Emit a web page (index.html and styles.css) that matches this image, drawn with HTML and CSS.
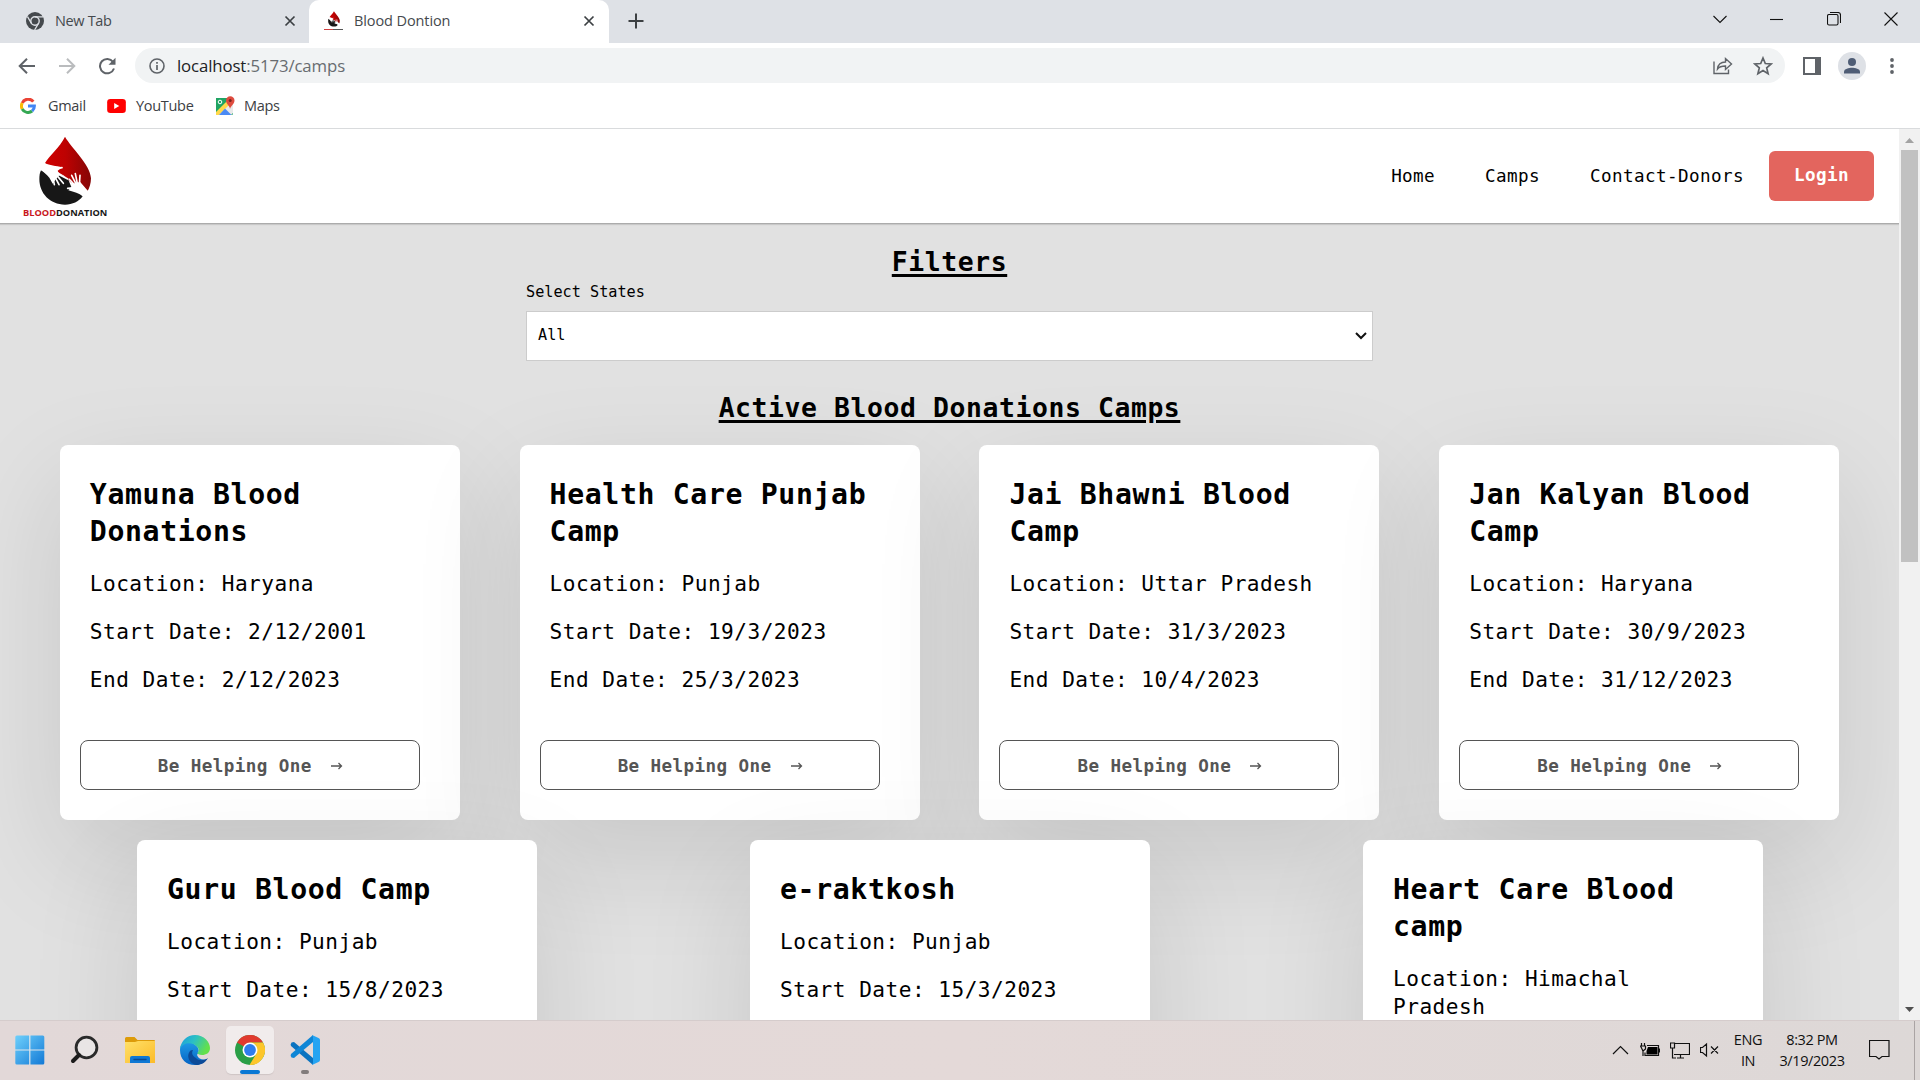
FILE: index.html
```html
<!DOCTYPE html>
<html lang="en">
<head>
<meta charset="utf-8">
<title>Blood Dontion</title>
<link rel="stylesheet" href="styles.css">
</head>
<body>
<svg width="0" height="0" class="defs">
  <defs>
    <linearGradient id="red" x1="0" y1="0" x2="1" y2="0"><stop offset="0" stop-color="#d00000"/><stop offset=".45" stop-color="#bd0202"/><stop offset="1" stop-color="#850606"/></linearGradient>
    <linearGradient id="win" x1="0" y1="0" x2="1" y2="1"><stop offset="0" stop-color="#6fd0fb"/><stop offset="1" stop-color="#1279d6"/></linearGradient>
    <linearGradient id="fold" x1="0" y1="0" x2="1" y2="1"><stop offset="0" stop-color="#ffe069"/><stop offset="1" stop-color="#fcbb28"/></linearGradient>
    <linearGradient id="edgeTop" x1="0" y1="0" x2="1" y2=".4"><stop offset="0" stop-color="#1a9be0"/><stop offset=".5" stop-color="#2cc0c4"/><stop offset="1" stop-color="#63e04c"/></linearGradient>
    <linearGradient id="edgeLow" x1="0" y1="0" x2="0" y2="1"><stop offset="0" stop-color="#1f9be6"/><stop offset="1" stop-color="#0563c4"/></linearGradient>
    <symbol id="drop" viewBox="113 32 165 212">
      <path fill="url(#red)" d="M195 35C213 68 271 118 273 160C273 176 268 189 263 198C250 190 246 180 232 176C214 178 206 166 197 156C188 148 178 146 172 138L187 127C168 122 148 122 135 114C148 92 180 66 195 35Z"/>
      <path fill="#171717" d="M123 136C133 142 138 148 148 158L158 176L176 150L190 153L205 164L214 186L205 196C222 202 238 205 248 214C236 230 218 239 195 239C150 239 118 205 118 163C118 152 119 144 123 136Z"/>
      <g fill="none" stroke="#fff" stroke-linecap="round">
        <path stroke-width="5" d="M165 132L186 128M158 156L163 179M164 154L177 179M171 152L190 175M178 149L203 162M225 188L203 190M224 180L208 163M228 177L215 151M232 176L226 146M238 180L240 151"/>
      </g>
      <path fill="#fff" d="M133 116L168 127L178 150L170 160L155 160L140 146L122 134ZM222 176L240 170L264 198L249 214L236 202L220 192Z"/>
    </symbol>
    <symbol id="x" viewBox="0 0 12 12"><path d="M1.500 1.500l9 9m0-9l-9 9" fill="none" stroke="#3c4043" stroke-width="1.700"/></symbol>
  </defs>
</svg>

<header class="browser">
  <div class="tabstrip">
    <div class="tab">
      <svg class="favicon" viewBox="0 0 18 18"><circle cx="9" cy="9" r="9" fill="#45494d"/><circle cx="9" cy="9" r="4.2" fill="#45494d" stroke="#dee1e6" stroke-width="1.4"/><path d="M9 4.8h8M5.3 11.2L1.5 4.6M12.6 11.2l-4 6.8" stroke="#dee1e6" stroke-width="1.3"/></svg>
      <span class="tab-title newtab">New Tab</span>
      <svg class="close"><use href="#x"/></svg>
    </div>
    <div class="tab active">
      <svg class="favicon brand" viewBox="0 0 20 20"><use href="#drop" x="3" y="0" width="14" height="16"/><path d="M0 18.5h9" stroke="#cf4040"/><path d="M9 18.5h10" stroke="#555"/></svg>
      <span class="tab-title">Blood Dontion</span>
      <svg class="close"><use href="#x"/></svg>
    </div>
    <svg class="plus" viewBox="0 0 16 16"><path d="M8 .5v15M.5 8h15" stroke="#3c4043" stroke-width="2"/></svg>
    <div class="window-controls">
      <span><svg width="14" height="14" viewBox="0 0 14 14"><path d="M.5 4L7 10.500l6.500-6.500"/></svg></span>
      <span><svg width="14" height="14" viewBox="0 0 14 14"><path d="M0 7.500h13"/></svg></span>
      <span><svg width="14" height="14" viewBox="0 0 14 14"><rect x=".5" y="2.500" width="10.500" height="10.500" rx="1.500"/><path d="M3 .5h8a2.500 2.500 0 0 1 2.500 2.500v8"/></svg></span>
      <span><svg width="14" height="14" viewBox="0 0 14 14"><path d="M.5.5l13 13m0-13l-13 13"/></svg></span>
    </div>
  </div>

  <div class="toolbar">
    <svg class="nav-btn" viewBox="0 0 18 18"><path d="M17 9H2M9 1.700L1.700 9 9 16.300" stroke="#5f6368"/></svg>
    <svg class="nav-btn" viewBox="0 0 18 18"><path d="M1 9h15M9 1.700L16.300 9 9 16.300" stroke="#babcbe"/></svg>
    <svg class="nav-btn" viewBox="0 0 18 18"><path d="M16 11.500A7.200 7.200 0 1 1 15 4.800" stroke="#5f6368"/><path d="M17.500.8v7h-7z" fill="#5f6368" stroke="none"/></svg>
    <div class="omnibox">
      <svg class="info" viewBox="0 0 16 16"><circle cx="8" cy="8" r="7" fill="none" stroke="#5f6368" stroke-width="1.600"/><path d="M8 7v5M8 4v1.800" stroke="#5f6368" stroke-width="1.700"/></svg>
      <span class="url"><b>localhost</b>:5173/camps</span>
      <svg class="share" viewBox="0 0 20 20"><path d="M1 5.500v12h14.500v-4M4.500 13c.5-4.500 3.500-7 8-7V2.500l6 5.500-6 5.500V10c-4 0-6.500 1-8 3z" fill="none" stroke="#5f6368" stroke-width="1.400"/></svg>
      <svg class="star" viewBox="0 0 20 20"><path d="M10 2l2.300 5.500 5.900.5-4.500 3.900 1.400 5.800L10 14.600l-5.100 3.100 1.400-5.800L1.800 8l5.900-.5z" fill="none" stroke="#5f6368" stroke-width="1.700"/></svg>
    </div>
    <svg class="panel" viewBox="0 0 18 18"><rect x="1" y="1" width="16" height="16" fill="none" stroke="#5f6368" stroke-width="2"/><path d="M12 1h5v16h-5z" fill="#5f6368"/></svg>
    <svg class="avatar" viewBox="0 0 28 28"><circle cx="14" cy="14" r="14" fill="#dee1e6"/><circle cx="14" cy="10" r="4" fill="#4f5d75"/><path d="M6 21.500v-1.800c0-3 5-4 8-4s8 1 8 4v1.800z" fill="#4f5d75"/></svg>
    <svg class="dots" viewBox="0 0 4 16"><g fill="#5f6368"><circle cx="2" cy="2" r="1.900"/><circle cx="2" cy="8" r="1.900"/><circle cx="2" cy="14" r="1.900"/></g></svg>
  </div>

  <nav class="bookmarks">
    <a class="bm-gmail"><svg width="16" height="16" viewBox="0 0 16 16" fill="none" stroke-width="3"><path d="M13.300 3.700A6.500 6.500 0 0 0 2.200 5" stroke="#ea4335"/><path d="M2.200 5a6.500 6.500 0 0 0 0 6" stroke="#fbbc05"/><path d="M2.200 11a6.500 6.500 0 0 0 9.900 2" stroke="#34a853"/><path d="M12.100 13A6.300 6.300 0 0 0 14.400 8H8" stroke="#4285f4"/></svg><span>Gmail</span></a>
    <a class="bm-youtube"><svg width="19" height="14" viewBox="0 0 20 15"><rect width="20" height="15" rx="3.500" fill="#f00"/><path d="M7.500 4.300v6.400l5.500-3.200z" fill="#fff"/></svg><span>YouTube</span></a>
    <a class="bm-maps"><svg width="19" height="19" viewBox="0 0 19 19"><rect x="0" y="2" width="17" height="17" rx="1.500" fill="#1fa463"/><path d="M2 19L17 4v13l-2 2z" fill="#e9e9e9"/><path d="M0 16L12 4l3 3L3 19H0z" fill="#ffd84a"/><path d="M0 2h12v2L0 14z" fill="#1fa463"/><path d="M3 19l6-6.500 6.500 6.500z" fill="#4a8af4"/><path d="M14 13c0-3-4-5-4-8.500a4 4 0 0 1 8.500 0C18.500 8 14.500 10 14 13z" fill="#de4b3e"/><circle cx="14.200" cy="4.400" r="1.500" fill="#7a231d"/><circle cx="4" cy="6" r="1.800" fill="none" stroke="#fff" stroke-width="1"/></svg><span>Maps</span></a>
  </nav>
</header>

<main class="viewport">
  <div class="page">
    <header class="navbar">
      <svg class="logo" viewBox="66 30 260 250">
        <use href="#drop" x="113" y="32" width="165" height="212"/>
        <text x="69" y="272" font-size="28" textLength="99" lengthAdjust="spacingAndGlyphs" fill="#c8171c">BLOOD</text>
        <text x="168" y="272" font-size="28" textLength="154" lengthAdjust="spacingAndGlyphs" fill="#171717">DONATION</text>
      </svg>
      <nav class="links">
        <a>Home</a>
        <a>Camps</a>
        <a>Contact-Donors</a>
        <button class="login">Login</button>
      </nav>
    </header>

    <section class="filters">
      <h2>Filters</h2>
      <label>Select States</label>
      <div class="select"><span>All</span><svg width="12" height="8" viewBox="0 0 12 8"><path d="M1 1l5 5 5-5" fill="none" stroke="#111" stroke-width="2"/></svg></div>
    </section>

    <section class="camps">
      <h2>Active Blood Donations Camps</h2>
      <div class="row">
        <article class="card">
          <h3>Yamuna Blood Donations</h3>
          <p>Location: Haryana</p><p>Start Date: 2/12/2001</p><p>End Date: 2/12/2023</p>
          <button class="help">Be Helping One <i><svg width="12" height="8" viewBox="0 0 12 8"><path d="M0 4h10.500M7.500 1l3 3-3 3"/></svg></i></button>
        </article>
        <article class="card">
          <h3>Health Care Punjab Camp</h3>
          <p>Location: Punjab</p><p>Start Date: 19/3/2023</p><p>End Date: 25/3/2023</p>
          <button class="help">Be Helping One <i><svg width="12" height="8" viewBox="0 0 12 8"><path d="M0 4h10.500M7.500 1l3 3-3 3"/></svg></i></button>
        </article>
        <article class="card">
          <h3>Jai Bhawni Blood Camp</h3>
          <p>Location: Uttar Pradesh</p><p>Start Date: 31/3/2023</p><p>End Date: 10/4/2023</p>
          <button class="help">Be Helping One <i><svg width="12" height="8" viewBox="0 0 12 8"><path d="M0 4h10.500M7.500 1l3 3-3 3"/></svg></i></button>
        </article>
        <article class="card">
          <h3>Jan Kalyan Blood Camp</h3>
          <p>Location: Haryana</p><p>Start Date: 30/9/2023</p><p>End Date: 31/12/2023</p>
          <button class="help">Be Helping One <i><svg width="12" height="8" viewBox="0 0 12 8"><path d="M0 4h10.500M7.500 1l3 3-3 3"/></svg></i></button>
        </article>
      </div>
      <div class="row three">
        <article class="card">
          <h3>Guru Blood Camp</h3>
          <p>Location: Punjab</p><p>Start Date: 15/8/2023</p>
        </article>
        <article class="card">
          <h3>e-raktkosh</h3>
          <p>Location: Punjab</p><p>Start Date: 15/3/2023</p>
        </article>
        <article class="card">
          <h3>Heart Care Blood camp</h3>
          <p>Location: Himachal Pradesh</p>
        </article>
      </div>
    </section>
  </div>
  <div class="scrollbar">
    <svg width="9" height="5" viewBox="0 0 9 5"><path d="M0 5L4.500 0 9 5z" fill="#a3a3a3"/></svg>
    <div class="thumb"></div>
    <svg width="9" height="5" viewBox="0 0 9 5"><path d="M0 0l4.500 5L9 0z" fill="#505050"/></svg>
  </div>
</main>

<footer class="taskbar">
  <div class="apps">
    <span><svg width="30" height="30" viewBox="0 0 30 30"><rect width="29" height="29" x=".3" y=".5" rx="1.500" fill="url(#win)"/><path d="M14.800 0v30M0 15h30" stroke="#e0e6ec" stroke-width="1.200"/></svg></span>
    <span><svg width="30" height="30" viewBox="0 0 30 30"><circle cx="16.500" cy="12.500" r="10.400" fill="#e9e5e5" stroke="#2a2a2a" stroke-width="2.800"/><path d="M9 20l-6 6" stroke="#1c1c1c" stroke-width="4" stroke-linecap="round"/></svg></span>
    <span><svg width="30" height="30" viewBox="0 0 30 30"><path d="M0 3.500Q0 2 1.500 2h8l3 3H29q1 0 1 1v6H0z" fill="#dd9b0a"/><path d="M0 7h10l3-1h17v22H0z" fill="url(#fold)"/><path d="M5 28v-5q0-2 2-2h16q2 0 2 2v5z" fill="#0f78d4"/><path d="M9 24.500h12" stroke="#0a4a92" stroke-width="1.400" stroke-linecap="round"/></svg></span>
    <span><svg width="30" height="30" viewBox="0 0 30 30"><path d="M0 15C0 7 8 5 14 9c5 3 6 7 3 11 2 5 6 5 10 4-3 4-7 6-12 6C6 30 0 24 0 15z" fill="url(#edgeLow)"/><path d="M10 16c-4 5-1 12 6 14 5 0 9-2 12-7-4 3-10 3-12 0-5-3-4-6-3-8-1 0-2 0-3 1z" fill="#0c4a98"/><path d="M0 14C1 6 7 0 15 0c9 0 15 7 15 13 0 5-4 7-8 7-3 0-5-1-4.500-2.500 2-1 1.500-4-.5-6C12 6.500 3 7 0 14z" fill="url(#edgeTop)"/></svg></span>
    <span><i class="tile running"><svg width="30" height="30" viewBox="0 0 30 30"><circle cx="15" cy="15" r="15" fill="#2a9f47"/><path d="M15 15L2 7.500A15 15 0 0 1 28 7.500H15z" fill="#e13a2f"/><path d="M28 7.500A15 15 0 0 1 14.500 30L21.500 18.500 21 10 15 7.500z" fill="#fdc62b"/><circle cx="15" cy="15" r="7.500" fill="#fff"/><circle cx="15" cy="15" r="5.900" fill="#2f7ded"/></svg></i></span>
    <span><i class="tile open"><svg width="30" height="30" viewBox="0 0 30 30"><path d="M1.500 7.500L4 7l19 16v7L1 11q-1-1.500.5-3.500z" fill="#0a73c0"/><path d="M1.500 22.500L4 23 23 7V0L1 19q-1 1.500.5 3.500z" fill="#0f86d6"/><path d="M22 0l6.500 3q1.500.7 1.500 2v20q0 1.300-1.500 2L22 30l1-2V2z" fill="#25a4f2"/></svg></i></span>
  </div>
  <div class="tray">
    <span class="chev"><svg width="17" height="10" viewBox="0 0 17 10"><path d="M1 9l7.500-7.500L16 9"/></svg></span>
    <span class="sys"><svg width="20" height="14" viewBox="0 0 20 14"><path d="M1.500 0v3M4.500 0v3M.5 3h5v3L3 8zM3 8v5"/><path d="M7 2.500h11.500v10H5v-3M19.500 5.500v4"/><path class="charge" d="M8 4h9.500v7.500H6.500V8z"/></svg></span>
    <span class="sys"><svg width="20" height="17" viewBox="0 0 20 17"><path d="M5 1.500h14.500v11H4M10.500 13v3M7 16h7M.5 1h4v5h-4zM2.500 6v10H6"/></svg></span>
    <span class="snd"><svg width="19" height="16" viewBox="0 0 19 16"><path d="M.5 5.500h2L6.500 2v12L2.500 10.500h-2zM11 4.500l7 7m0-7l-7 7"/></svg></span>
    <span class="lang">ENG<br>IN</span>
    <span class="clock">8:32 PM<br>3/19/2023</span>
    <span class="note"><svg width="21" height="20" viewBox="0 0 21 20"><path d="M.5.5h19.500v16H13L10 19l-3-2.500H.5z"/></svg></span>
    <span class="peek"></span>
  </div>
</footer>
</body>
</html>
```
FILE: styles.css
```css
* { box-sizing: border-box; }
body {
  margin: 0;
  width: 1920px;
  height: 1080px;
  overflow: hidden;
  display: flex;
  flex-direction: column;
  font-family: "Open Sans", "Noto Sans", sans-serif;
}
svg { display: block; flex: none; }
.defs { position: absolute; }

/* browser chrome */
.browser { height: 129px; flex: none; background: #fff; border-bottom: 1px solid #d9dbdd; }
.tabstrip { height: 43px; background: #dee1e6; display: flex; align-items: center; }
.tab { height: 43px; width: 309px; padding: 0 13px 2px 26px; display: flex; align-items: center; }
.tab.active { width: 300px; padding: 0 14px 2px 15px; background: #fff; border-radius: 10px 10px 0 0; }
.favicon { width: 18px; height: 18px; margin-right: 11px; }
.favicon.brand { width: 20px; height: 20px; margin-right: 10px; }
.tab-title { flex: 1; font-size: 14.5px; letter-spacing: -.1px; color: #45494d; }
.tab-title.newtab { letter-spacing: -.35px; }
.close { width: 12px; height: 12px; }
.plus { width: 16px; height: 16px; margin: 0 auto 1px 19px; }
.window-controls { display: flex; padding: 0 1px 6px 0; }
.window-controls span { width: 57px; display: flex; justify-content: center; }
.window-controls path, .window-controls rect { fill: none; stroke: #111; stroke-width: 1.1; }

.toolbar { height: 45px; display: flex; align-items: center; padding: 0 26px 0 18px; }
.nav-btn { width: 18px; height: 18px; margin-right: 22px; fill: none; stroke-width: 2; }
.nav-btn + .nav-btn + .nav-btn { margin-right: 19px; }
.omnibox { width: 1650px; height: 35px; border-radius: 18px; background: #f1f3f4; display: flex; align-items: center; padding: 0 12px 0 14px; }
.info { width: 16px; height: 16px; margin-right: 12px; }
.url { flex: 1; font-size: 16.8px; letter-spacing: -.12px; color: #686c70; }
.url b { font-weight: 400; color: #202124; }
.share { width: 20px; height: 20px; margin-right: 20px; }
.star { width: 20px; height: 20px; }
.panel { width: 18px; height: 18px; margin: 0 17px 0 18px; }
.avatar { width: 28px; height: 28px; margin-right: 24px; }
.dots { width: 4px; height: 16px; }

.bookmarks { height: 35px; display: flex; align-items: center; padding-left: 20px; font-size: 14.5px; letter-spacing: -.3px; color: #3c4043; }
.bookmarks a { display: flex; align-items: center; }
.bookmarks span { flex: 1; white-space: nowrap; }
.bm-gmail { width: 87px; gap: 12px; }
.bm-youtube { width: 109px; gap: 10px; }
.bm-maps { gap: 9px; }

/* web page */
.viewport { height: 891px; flex: none; display: flex; overflow: hidden; }
.page { width: 1899px; background: #e1e1e1; font-family: "DejaVu Sans Mono", monospace; color: #000; overflow: hidden; }
.page h2, .page h3, .page p, .page a, .page button, .page label, .select span { letter-spacing: .0228em; }
.navbar { height: 95px; background: #fff; border-bottom: 1px solid #ababab; box-shadow: 0 1px 1px #c8c8c8; display: flex; justify-content: space-between; align-items: flex-start; padding: 6px 25px 0 22px; }
.logo { width: 86.7px; height: 83.3px; font-family: "Open Sans", sans-serif; font-weight: 700; }
.links { display: flex; align-items: center; padding-top: 16px; font-size: 17.6px; }
.links a { margin-right: 50px; }
.links a:nth-child(3) { margin-right: 25px; }
button { font: inherit; font-weight: 700; }
.login { width: 105px; height: 50px; border: 0; border-radius: 6px; background: #e3655e; color: #fff; padding: 0 0 2px; }

h2 { margin: 0; text-align: center; font-size: 26.4px; line-height: 36px; text-decoration: underline; text-decoration-thickness: 3px; text-underline-offset: 3px; }
.filters { width: 847px; margin: 0 auto; padding-top: 20px; display: flex; flex-direction: column; }
.filters label { font-size: 15.2px; line-height: 20px; margin: 2px 0 9px; }
.filters label, .filters .select span { letter-spacing: 0; }
.select { height: 50px; background: #fff; border: 1px solid #ccc; display: flex; align-items: center; justify-content: space-between; padding: 0 5px 2px 11px; font-size: 15.2px; }
.select svg { margin-top: 2px; }
.camps { padding-top: 29px; }
.row { display: flex; justify-content: space-evenly; margin: 19px 0 20px; }
.row.three { justify-content: space-between; padding: 0 136px 0 137px; }
.card { width: 400px; height: 375px; padding: 31px 30px 0; background: #fff; border-radius: 8px; box-shadow: 0 38px 110px rgba(0, 0, 0, .115); display: flex; flex-direction: column; }
.card h3 { margin: 0; font-size: 28.16px; line-height: 37.2px; }
.card p { margin: 20px 0 0; font-size: 21.12px; line-height: 28px; }
.help { width: 340px; height: 50px; margin: 45.6px 0 0 -10px; border: 1px solid #555; border-radius: 8px; background: transparent; color: #555; font-size: 17.6px; display: flex; align-items: center; justify-content: center; padding: 1px 0 0 1px; }
.help i { margin-left: 19px; }
.help path { fill: none; stroke: #555; stroke-width: 1.3; }

.scrollbar { width: 21px; background: #f1f1f1; display: flex; flex-direction: column; align-items: center; padding: 9px 1px 8px 0; }
.thumb { width: 17px; height: 412px; margin: 7px 0 auto; background: #c1c1c1; }

/* taskbar */
.taskbar { height: 60px; flex: none; background: linear-gradient(90deg, #e2d8d8, #e4d9d8 50%, #ddd8d7); border-top: 1px solid #d5cccc; display: flex; justify-content: space-between; }
.apps { display: flex; padding: 0 0 1px 2px; }
.apps span { width: 55px; display: flex; align-items: center; justify-content: center; }
.tile { width: 48px; height: 48px; border-radius: 5px; display: flex; align-items: center; justify-content: center; position: relative; }
.running { background: #f1ecec; box-shadow: 0 1px 1px #cfc5c5; }
.tile::after { content: ""; position: absolute; bottom: 0; width: 20px; height: 4px; border-radius: 2px; background: #0a78d4; }
.open::after { width: 8px; background: #827c7c; }
.tray { display: flex; align-items: center; padding-bottom: 1px; font-size: 14.5px; line-height: 21.5px; letter-spacing: -.4px; text-align: center; color: #111; }
.tray span { display: flex; align-items: center; justify-content: center; }
.tray path { fill: none; stroke: #111; stroke-width: 1.2; }
.tray .charge { fill: #000; stroke: none; }
.chev, .sys { width: 30px; }
.snd { width: 29px; }
.lang { width: 48px; }
.clock { width: 80px; }
.note { width: 62px; padding-right: 8px; }
.tray .peek { width: 6px; height: 59px; border-left: 1px solid #aaa4a4; }
```
